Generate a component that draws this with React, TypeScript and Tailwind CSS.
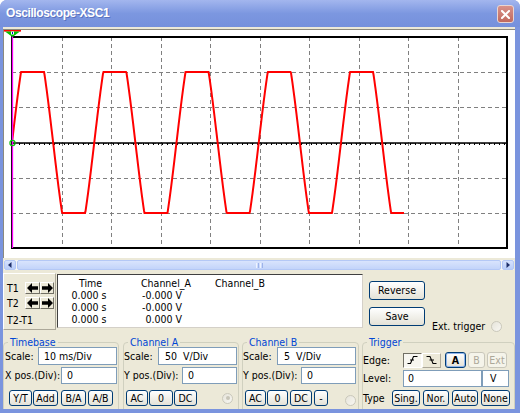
import React from "react";

const FONT = "font-['DejaVu_Sans_Condensed','Liberation_Sans',Arial,sans-serif]";
const BTN =
  "flex items-center justify-center rounded-[3px] border border-[#003C74] bg-linear-to-b from-white to-[#E4E2D7] text-black text-[10.5px] leading-none";
const BTN_DIS =
  "flex items-center justify-center rounded-[3px] border border-[#C9C7BA] bg-[#F5F4EA] text-[#ACA899] text-[10.5px] leading-none";
const INPUT =
  "flex items-center border border-[#7F9DB9] bg-white text-black text-[10.5px] leading-none whitespace-pre";
const RAISED =
  "flex items-center justify-center border border-t-white border-l-white border-r-[#716F64] border-b-[#716F64] bg-[#ECE9D8]";

function Plot() {
  const x0 = 12,
    x1 = 507,
    y0 = 37,
    y1 = 248;
  const dx = (x1 - x0) / 10;
  const dy = (y1 - y0) / 6;
  const cy = y0 + 3 * dy;
  const P = 82.25,
    A = 111,
    clip = 70.5;
  const pts: string[] = [];
  for (let x = 12; x <= 404; x += 0.5) {
    let v = A * Math.sin((2 * Math.PI * (x - 12)) / P);
    v = Math.max(-clip, Math.min(clip, v));
    pts.push(`${x.toFixed(1)},${(cy - v).toFixed(2)}`);
  }
  const vlines = [];
  for (let i = 1; i < 10; i++) {
    const x = Math.round(x0 + dx * i) + 0.5;
    vlines.push(
      <line key={"v" + i} x1={x} y1={y0} x2={x} y2={y1} stroke="#808080" strokeWidth={1} strokeDasharray="4 3" />
    );
  }
  const hlines = [];
  for (let j = 1; j < 6; j++) {
    const y = Math.round(y0 + dy * j) + 0.5;
    hlines.push(
      <line key={"h" + j} x1={x0} y1={y} x2={x1} y2={y} stroke="#808080" strokeWidth={1} strokeDasharray="4 3" />
    );
  }
  const ticks = [];
  for (let x = 14; x < 507; x += 4.95) {
    const xx = Math.round(x) + 0.5;
    ticks.push(<line key={"t" + x} x1={xx} y1={143} x2={xx} y2={145} stroke="#000" strokeWidth={1} />);
  }
  return (
    <svg width={511} height={228} viewBox="4 30 511 228" className="block">
      <rect x={4} y={30} width={511} height={228} fill="#fff" />
      {vlines}
      {hlines}
      <line x1={12} y1={143} x2={507} y2={143} stroke="#000" strokeWidth={1.6} />
      {ticks}
      <polyline points={pts.join(" ")} fill="none" stroke="#FF0000" strokeWidth={2} strokeLinejoin="miter" />
      <rect x={12} y={37} width={495} height={211} fill="none" stroke="#000" strokeWidth={2} />
      <line x1={12.5} y1={33} x2={12.5} y2={248} stroke="#FF00FF" strokeWidth={1.3} />
      <circle cx={12.5} cy={143} r={2.6} fill="none" stroke="#10C010" strokeWidth={1.2} />
      <rect x={4} y={30} width={17} height={1.6} fill="#FF0000" />
      <polygon points="5,31.5 20,31.5 12.5,37" fill="#00C000" />
      <rect x={11} y={31.5} width={3} height={3} fill="#fff" />
      <rect x={12} y={32} width={1} height={2} fill="#0000C0" />
    </svg>
  );
}

function ArrowIcon({ dir }: { dir: "l" | "r" }) {
  return (
    <svg width={11} height={10} viewBox="0 0 11 10">
      {dir === "l" ? (
        <path d="M0 5 L5 0 V3.2 H11 V6.8 H5 V10 Z" fill="#000" />
      ) : (
        <path d="M11 5 L6 0 V3.2 H0 V6.8 H6 V10 Z" fill="#000" />
      )}
    </svg>
  );
}

function Radio({ dot }: { dot?: boolean }) {
  return (
    <div className="w-[11px] h-[11px] rounded-full border border-[#CAC8BB] bg-linear-to-br from-[#E6E4DA] to-[#F8F7F2] flex items-center justify-center">
      {dot ? <div className="w-[4px] h-[4px] rounded-full bg-[#C7C5B8]" /> : null}
    </div>
  );
}

function TitleBar() {
  return (
    <div className="h-[27px] flex items-start justify-between pl-[6px] pr-[6px] bg-linear-to-b from-[#A3B6EE] via-[#7C97E0] to-[#7590DC]">
      <div className="mt-[6px] font-['Liberation_Sans',Arial,sans-serif] text-white text-[12px] font-bold tracking-[-0.4px] leading-[14px] [text-shadow:1px_1px_0_#5A72BE]">
        Oscilloscope-XSC1
      </div>
      <div className="mt-[5px] w-[17px] h-[18px] rounded-[3px] border border-[#E9D6D2] bg-linear-to-b from-[#D8928A] to-[#C06A5E] flex items-center justify-center">
        <svg width={9} height={9} viewBox="0 0 9 9">
          <path d="M1 1 L8 8 M8 1 L1 8" stroke="#fff" strokeWidth={2} strokeLinecap="square" />
        </svg>
      </div>
    </div>
  );
}

function Scrollbar() {
  return (
    <div className="mt-[2px] mx-[1px] h-[10px] flex bg-[#F7F6F3]">
      <div className="w-[12px] h-full rounded-[2px] border border-[#B4C8F6] bg-linear-to-b from-[#D6E2FD] to-[#B9CDF9] flex items-center justify-center">
        <svg width={4} height={6} viewBox="0 0 4 6">
          <path d="M3.5 0 V6 L0 3 Z" fill="#1E2F6A" />
        </svg>
      </div>
      <div className="flex-1 mx-[1px] rounded-[2px] border border-[#B4C8F6] bg-linear-to-b from-[#D9E4FD] to-[#C3D4FA] flex items-center justify-center gap-[1px]">
        <div className="w-[1px] h-[5px] bg-[#EEF3FF]" />
        <div className="w-[1px] h-[5px] bg-[#9DB3EA]" />
        <div className="w-[1px] h-[5px] bg-[#EEF3FF]" />
        <div className="w-[1px] h-[5px] bg-[#9DB3EA]" />
      </div>
      <div className="w-[12px] h-full rounded-[2px] border border-[#B4C8F6] bg-linear-to-b from-[#D6E2FD] to-[#B9CDF9] flex items-center justify-center">
        <svg width={4} height={6} viewBox="0 0 4 6">
          <path d="M0.5 0 V6 L4 3 Z" fill="#1E2F6A" />
        </svg>
      </div>
    </div>
  );
}

function CursorRow() {
  return (
    <div className="mt-[3px] h-[57px] flex items-start text-[10.5px] leading-none text-black">
      <div className="w-[53px] h-[57px] border border-t-white border-l-white border-r-[#ACA899] border-b-[#ACA899] flex flex-col pl-[3px]">
        <div className="mt-[8px] h-[12px] flex items-center">
          <div className="w-[18px]">T1</div>
          <div className={RAISED + " w-[15px] h-[12px]"}>
            <ArrowIcon dir="l" />
          </div>
          <div className={RAISED + " w-[14px] h-[12px]"}>
            <ArrowIcon dir="r" />
          </div>
        </div>
        <div className="mt-[3px] h-[12px] flex items-center">
          <div className="w-[18px]">T2</div>
          <div className={RAISED + " w-[15px] h-[12px]"}>
            <ArrowIcon dir="l" />
          </div>
          <div className={RAISED + " w-[14px] h-[12px]"}>
            <ArrowIcon dir="r" />
          </div>
        </div>
        <div className="mt-[5px] h-[12px] flex items-center">T2-T1</div>
      </div>
      <div className="ml-[1px] mt-[1px] w-[306px] h-[54px] border border-t-[#404040] border-l-[#404040] border-r-[#D4D0C8] border-b-[#D4D0C8] bg-white flex pt-[2px] pl-[13px] leading-[12px] whitespace-nowrap">
        <div className="w-[36px] flex flex-col text-center">
          <div className="pl-[3px]">Time</div>
          <div>0.000 s</div>
          <div>0.000 s</div>
          <div>0.000 s</div>
        </div>
        <div className="ml-[33px] w-[42px] flex flex-col text-right">
          <div className="text-left pl-[1px]">Channel_A</div>
          <div>-0.000 V</div>
          <div>-0.000 V</div>
          <div>0.000 V</div>
        </div>
        <div className="ml-[33px] flex flex-col">
          <div>Channel_B</div>
        </div>
      </div>
      <div className="ml-[6px] flex flex-col">
        <div className={BTN + " mt-[8px] w-[56px] h-[19px]"}>Reverse</div>
        <div className={BTN + " mt-[7px] w-[56px] h-[19px]"}>Save</div>
      </div>
      <div className="ml-[7px] mt-[47px] h-[12px] flex items-center">
        <span>Ext. trigger</span>
        <div className="ml-[6px]">
          <Radio />
        </div>
      </div>
    </div>
  );
}

function Legend({ children }: { children: React.ReactNode }) {
  return <legend className="ml-[4px] px-[2px] text-[10.5px] leading-[11px] text-[#0046D5]">{children}</legend>;
}

const FIELD = "border border-[#D0D0BF] rounded-[4px] h-[90px] min-w-0 text-[10.5px] leading-none text-black";

function EdgeIcon({ rising }: { rising: boolean }) {
  return (
    <svg width={11} height={10} viewBox="0 0 11 10">
      {rising ? (
        <path d="M0.5 8.5 H3.5 L6.5 1.5 H10.5 M3 5 H7" fill="none" stroke="#000" strokeWidth={1.1} />
      ) : (
        <path d="M0.5 1.5 H4 L7 8.5 H10.5 M3.5 5 H8" fill="none" stroke="#000" strokeWidth={1.1} />
      )}
    </svg>
  );
}

function Groups() {
  return (
    <div className="mt-[7px] flex-1 flex overflow-hidden">
      <fieldset className={FIELD + " w-[116px]"}>
        <Legend>Timebase</Legend>
        <div className="-mt-[1px] h-[18px] flex items-center pl-[1px]">
          <div className="w-[33px]">Scale:</div>
          <div className={INPUT + " w-[79px] h-[18px] pl-[5px]"}>10 ms/Div</div>
        </div>
        <div className="mt-[2px] h-[17px] flex items-center pl-[1px]">
          <div className="w-[56px] whitespace-nowrap">X pos.(Div):</div>
          <div className={INPUT + " w-[56px] h-[17px] pl-[5px]"}>0</div>
        </div>
        <div className="mt-[6px] h-[16px] flex items-center pl-[5px]">
          <div className={BTN + " w-[23px] h-[16px]"}>Y/T</div>
          <div className={BTN + " ml-[1px] w-[25px] h-[16px]"}>Add</div>
          <div className={BTN + " ml-[3px] w-[25px] h-[16px]"}>B/A</div>
          <div className={BTN + " ml-[2px] w-[25px] h-[16px]"}>A/B</div>
        </div>
      </fieldset>
      <fieldset className={FIELD + " ml-[4px] w-[116px]"}>
        <Legend>Channel A</Legend>
        <div className="-mt-[1px] h-[18px] flex items-center">
          <div className="w-[34px]">Scale:</div>
          <div className={INPUT + " w-[79px] h-[18px] pl-[6px]"}>50  V/Div</div>
        </div>
        <div className="mt-[2px] h-[17px] flex items-center">
          <div className="w-[58px] whitespace-nowrap">Y pos.(Div):</div>
          <div className={INPUT + " w-[55px] h-[17px] pl-[5px]"}>0</div>
        </div>
        <div className="mt-[6px] h-[16px] flex items-center pl-[2px]">
          <div className={BTN + " w-[22px] h-[16px]"}>AC</div>
          <div className={BTN + " ml-[1px] w-[24px] h-[16px]"}>0</div>
          <div className={BTN + " ml-[1px] w-[23px] h-[16px]"}>DC</div>
          <div className="ml-auto mr-[5px]">
            <Radio dot />
          </div>
        </div>
      </fieldset>
      <fieldset className={FIELD + " ml-[3px] w-[117px]"}>
        <Legend>Channel B</Legend>
        <div className="-mt-[1px] h-[18px] flex items-center">
          <div className="w-[34px]">Scale:</div>
          <div className={INPUT + " w-[79px] h-[18px] pl-[6px]"}>5  V/Div</div>
        </div>
        <div className="mt-[2px] h-[17px] flex items-center">
          <div className="w-[58px] whitespace-nowrap">Y pos.(Div):</div>
          <div className={INPUT + " w-[55px] h-[17px] pl-[5px]"}>0</div>
        </div>
        <div className="mt-[6px] h-[16px] flex items-center pl-[2px]">
          <div className={BTN + " w-[21px] h-[16px]"}>AC</div>
          <div className={BTN + " ml-[1px] w-[21px] h-[16px]"}>0</div>
          <div className={BTN + " ml-[2px] w-[22px] h-[16px]"}>DC</div>
          <div className={BTN + " ml-[2px] w-[14px] h-[16px]"}>-</div>
          <div className="ml-auto mr-[2px] mt-[4px]">
            <Radio />
          </div>
        </div>
      </fieldset>
      <fieldset className={FIELD + " ml-[3px] w-[153px]"}>
        <Legend>Trigger</Legend>
        <div className="mt-[4px] h-[16px] flex items-center">
          <div className="w-[40px]">Edge:</div>
          <div className="w-[19px] h-[15px] flex items-center justify-center border border-t-[#716F64] border-l-[#716F64] border-r-white border-b-white bg-[#F7F6F0]">
            <EdgeIcon rising />
          </div>
          <div className="w-[19px] h-[15px] flex items-center justify-center border border-t-white border-l-white border-r-[#ACA899] border-b-[#ACA899] bg-[#ECE9D8]">
            <EdgeIcon rising={false} />
          </div>
          <div className={BTN + " ml-[4px] w-[21px] h-[16px] font-bold ring-1 ring-inset ring-[#8FB4EC]"}>A</div>
          <div className={BTN_DIS + " ml-[2px] w-[17px] h-[16px]"}>B</div>
          <div className={BTN_DIS + " ml-[2px] w-[20px] h-[16px]"}>Ext</div>
        </div>
        <div className="mt-[2px] h-[17px] flex items-center">
          <div className="w-[40px]">Level:</div>
          <div className={INPUT + " w-[79px] h-[17px] pl-[4px]"}>0</div>
          <div className={INPUT + " w-[27px] h-[17px] pl-[7px]"}>V</div>
        </div>
        <div className="mt-[3px] h-[16px] flex items-center">
          <div className="w-[29px]">Type</div>
          <div className={BTN + " w-[28px] h-[16px]"}>Sing.</div>
          <div className={BTN + " ml-[3px] w-[26px] h-[16px]"}>Nor.</div>
          <div className={BTN + " ml-[3px] w-[26px] h-[16px]"}>Auto</div>
          <div className={BTN + " ml-[3px] w-[29px] h-[16px]"}>None</div>
        </div>
      </fieldset>
    </div>
  );
}

export default function App() {
  return (
    <div className={FONT + " w-[520px] h-[413px] bg-[#7A94DE] rounded-t-[7px] flex flex-col overflow-hidden"}>
      <TitleBar />
      <div className="ml-[3px] mr-[5px] h-[382px] bg-[#ECE9D8] flex flex-col">
        <div className="mt-[2px] h-[229px] border-t border-l border-[#8C8A7E] bg-white">
          <Plot />
        </div>
        <Scrollbar />
        <CursorRow />
        <Groups />
      </div>
      <div className="h-[4px]" />
    </div>
  );
}
